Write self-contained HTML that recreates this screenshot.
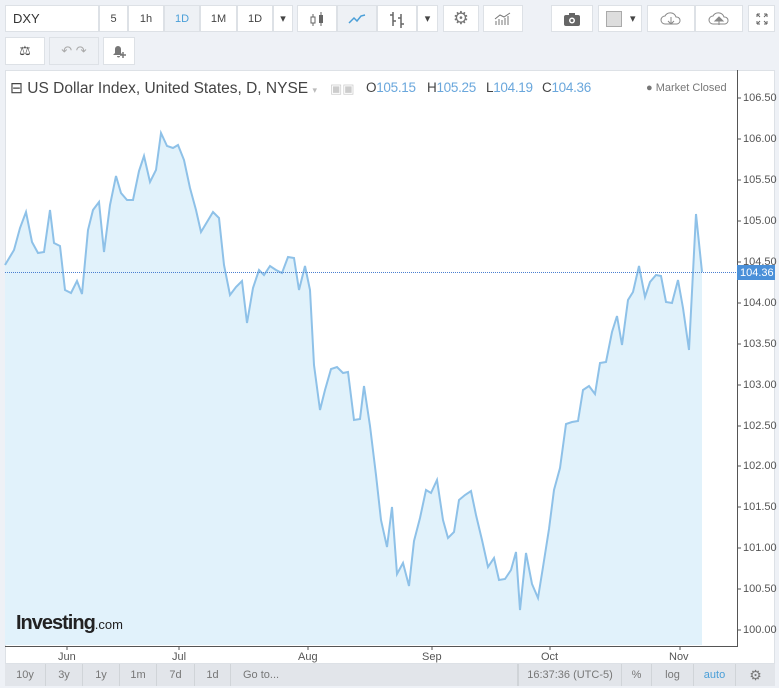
<!DOCTYPE html>
<html><head><meta charset="utf-8"><style>
*{box-sizing:border-box;margin:0;padding:0}
body{width:779px;height:688px;background:#eef1f6;font-family:"Liberation Sans",sans-serif;position:relative;overflow:hidden;color:#555}
.b{position:absolute;background:#fff;border:1px solid #dde1e6;font-size:11px;display:flex;align-items:center;justify-content:center;color:#444}
.ax{position:absolute;font-size:11px;color:#555}
.bt{position:absolute;top:664px;height:22px;font-size:11px;color:#777;display:flex;align-items:center;justify-content:center;border-right:1px solid #d0d4d8}
.h{position:absolute;top:79px;font-size:15px;color:#444;white-space:nowrap}
.h span{color:#6aa7dc}
.o{top:80px;font-size:13.5px;letter-spacing:-0.3px}
</style></head><body>
<div class="b" style="left:5px;top:5px;width:94px;height:27px;justify-content:flex-start;padding-left:7px;font-size:13px;color:#333">DXY</div>
<div class="b" style="left:99px;top:5px;width:29px;height:27px">5</div>
<div class="b" style="left:128px;top:5px;width:36px;height:27px">1h</div>
<div class="b" style="left:164px;top:5px;width:36px;height:27px;background:#eef1f5;color:#4a9fd8">1D</div>
<div class="b" style="left:200px;top:5px;width:37px;height:27px">1M</div>
<div class="b" style="left:237px;top:5px;width:36px;height:27px">1D</div>
<div class="b" style="left:273px;top:5px;width:20px;height:27px">▾</div>
<div class="b" style="left:297px;top:5px;width:40px;height:27px"><svg width="16" height="18"><path d="M4 4v12M12 2v14" stroke="#666"/><rect x="2" y="7" width="4" height="6" fill="#fff" stroke="#666"/><rect x="10" y="5" width="4" height="8" fill="#666"/></svg></div>
<div class="b" style="left:337px;top:5px;width:40px;height:27px;background:#eef1f5"><svg width="18" height="12"><path d="M1 10L6 5L9 8L13 3L17 2" stroke="#4a9fd8" fill="none" stroke-width="1.5"/></svg></div>
<div class="b" style="left:377px;top:5px;width:40px;height:27px"><svg width="16" height="18"><path d="M4 2v14M1 5h3M4 11h3M12 4v14M9 8h3M12 14h3" stroke="#666" stroke-width="1.5"/></svg></div>
<div class="b" style="left:417px;top:5px;width:21px;height:27px">▾</div>
<div class="b" style="left:443px;top:5px;width:36px;height:27px;font-size:18px;color:#777">⚙</div>
<div class="b" style="left:483px;top:5px;width:40px;height:27px"><svg width="18" height="14"><path d="M2 13v-4M5 13v-6M8 13v-5M11 13v-7M14 13v-9M1 7L6 3L10 5L16 1" stroke="#777" fill="none"/></svg></div>
<div class="b" style="left:551px;top:5px;width:42px;height:27px"><svg width="18" height="14"><rect x="1" y="3" width="16" height="11" rx="2" fill="#666"/><rect x="6" y="1" width="6" height="3" fill="#666"/><circle cx="9" cy="8.5" r="3" fill="#fff"/><circle cx="9" cy="8.5" r="1.5" fill="#666"/></svg></div>
<div class="b" style="left:598px;top:5px;width:44px;height:27px;justify-content:flex-start;padding-left:7px"><span style="width:16px;height:16px;background:#ddd;border:1px solid #aaa;display:inline-block"></span><span style="margin-left:8px">▾</span></div>
<div class="b" style="left:647px;top:5px;width:48px;height:27px"><svg width="22" height="16"><path d="M5 13a4 4 0 0 1 0-8a6 6 0 0 1 11 1a3.5 3.5 0 0 1 1 7z" fill="none" stroke="#888"/><path d="M11 6v7M8 10l3 3l3-3" fill="none" stroke="#888"/></svg></div>
<div class="b" style="left:695px;top:5px;width:48px;height:27px"><svg width="22" height="16"><path d="M5 13a4 4 0 0 1 0-8a6 6 0 0 1 11 1a3.5 3.5 0 0 1 1 7z" fill="none" stroke="#888"/><path d="M11 14v-7M7 10l4-4l4 4z" fill="#888" stroke="#888"/></svg></div>
<div class="b" style="left:748px;top:5px;width:27px;height:27px"><svg width="14" height="14"><path d="M2 2l3 3M2 2h3M2 2v3M12 2l-3 3M12 2h-3M12 2v3M2 12l3-3M2 12h3M2 12v-3M12 12l-3-3M12 12h-3M12 12v-3" stroke="#666" fill="none"/></svg></div>
<div class="b" style="left:5px;top:37px;width:40px;height:28px;font-size:13px">⚖</div>
<div class="b" style="left:49px;top:37px;width:50px;height:28px;background:#eef1f5;color:#aaa;font-size:13px">↶ ↷</div>
<div class="b" style="left:103px;top:37px;width:32px;height:28px"><svg width="16" height="16"><path d="M2 12h10l-2-2v-4a3 3 0 0 0-6 0v4z M6 13a1.5 1.5 0 0 0 3 0" fill="#777"/><path d="M12 9v6M9 12h6" stroke="#777" stroke-width="1.5"/></svg></div>
<div style="position:absolute;left:5px;top:70px;width:770px;height:594px;background:#fff;border:1px solid #dde1e6"></div>
<svg style="position:absolute;left:0;top:0" width="779" height="688">
<polygon fill="#e1f2fb" points="5,265 14,250 20,228 26,212 32,242 38,253 44,252 50,210 54,243 60,246 65,290 71,293 77,281 82,294 88,230 93,210 99,202 104,252 110,205 116,176 121,193 127,200 133,200 139,171 144,156 150,182 156,170 161,133 167,146 173,148 178,145 184,160 190,188 196,210 201,232 207,222 213,212 219,218 224,265 230,295 236,287 242,281 247,323 253,288 259,270 264,275 270,266 276,270 282,273 288,257 294,258 299,290 305,266 310,290 314,365 320,410 325,390 331,369 337,367 343,373 348,372 354,420 360,419 364,386 370,426 376,475 381,520 387,547 392,507 397,574 403,563 409,586 414,541 420,518 426,490 431,493 437,480 443,520 448,538 454,532 459,500 465,495 471,491 476,515 482,540 488,567 494,558 499,580 505,579 511,570 516,552 520,610 526,553 532,584 538,598 543,567 549,529 554,490 560,468 566,424 572,422 578,421 583,390 589,386 595,394 600,363 606,362 612,332 617,316 622,345 628,300 633,292 639,266 645,297 650,282 656,275 661,276 666,302 672,303 678,280 683,308 689,350 696,214 702,272 702,645 5,645"/>
<polyline fill="none" stroke="#8ec1e8" stroke-width="2" points="5,265 14,250 20,228 26,212 32,242 38,253 44,252 50,210 54,243 60,246 65,290 71,293 77,281 82,294 88,230 93,210 99,202 104,252 110,205 116,176 121,193 127,200 133,200 139,171 144,156 150,182 156,170 161,133 167,146 173,148 178,145 184,160 190,188 196,210 201,232 207,222 213,212 219,218 224,265 230,295 236,287 242,281 247,323 253,288 259,270 264,275 270,266 276,270 282,273 288,257 294,258 299,290 305,266 310,290 314,365 320,410 325,390 331,369 337,367 343,373 348,372 354,420 360,419 364,386 370,426 376,475 381,520 387,547 392,507 397,574 403,563 409,586 414,541 420,518 426,490 431,493 437,480 443,520 448,538 454,532 459,500 465,495 471,491 476,515 482,540 488,567 494,558 499,580 505,579 511,570 516,552 520,610 526,553 532,584 538,598 543,567 549,529 554,490 560,468 566,424 572,422 578,421 583,390 589,386 595,394 600,363 606,362 612,332 617,316 622,345 628,300 633,292 639,266 645,297 650,282 656,275 661,276 666,302 672,303 678,280 683,308 689,350 696,214 702,272"/>
<line x1="5" y1="272.5" x2="737" y2="272.5" stroke="#4a7fd0" stroke-dasharray="1,1"/>
<line x1="737.5" y1="70" x2="737.5" y2="647" stroke="#555"/>
<line x1="5" y1="646.5" x2="737" y2="646.5" stroke="#555"/>
<g stroke="#555"><line x1="737" y1="98" x2="741" y2="98"/><line x1="737" y1="139" x2="741" y2="139"/><line x1="737" y1="180" x2="741" y2="180"/><line x1="737" y1="221" x2="741" y2="221"/><line x1="737" y1="262" x2="741" y2="262"/><line x1="737" y1="303" x2="741" y2="303"/><line x1="737" y1="344" x2="741" y2="344"/><line x1="737" y1="385" x2="741" y2="385"/><line x1="737" y1="426" x2="741" y2="426"/><line x1="737" y1="466" x2="741" y2="466"/><line x1="737" y1="507" x2="741" y2="507"/><line x1="737" y1="548" x2="741" y2="548"/><line x1="737" y1="589" x2="741" y2="589"/><line x1="737" y1="630" x2="741" y2="630"/>
<line x1="67" y1="646" x2="67" y2="650"/><line x1="179" y1="646" x2="179" y2="650"/><line x1="308" y1="646" x2="308" y2="650"/><line x1="432" y1="646" x2="432" y2="650"/><line x1="550" y1="646" x2="550" y2="650"/><line x1="680" y1="646" x2="680" y2="650"/></g>
<rect x="737" y="265" width="38" height="15" fill="#4a90d9"/>
<text x="740" y="276" font-size="11" fill="#fff" font-family="Liberation Sans">104.36</text>
</svg>
<div class="ax" style="left:743px;top:92px">106.50</div><div class="ax" style="left:743px;top:133px">106.00</div><div class="ax" style="left:743px;top:174px">105.50</div><div class="ax" style="left:743px;top:215px">105.00</div><div class="ax" style="left:743px;top:256px">104.50</div><div class="ax" style="left:743px;top:297px">104.00</div><div class="ax" style="left:743px;top:338px">103.50</div><div class="ax" style="left:743px;top:379px">103.00</div><div class="ax" style="left:743px;top:420px">102.50</div><div class="ax" style="left:743px;top:460px">102.00</div><div class="ax" style="left:743px;top:501px">101.50</div><div class="ax" style="left:743px;top:542px">101.00</div><div class="ax" style="left:743px;top:583px">100.50</div><div class="ax" style="left:743px;top:624px">100.00</div>
<div class="ax" style="left:58px;top:651px">Jun</div><div class="ax" style="left:172px;top:651px">Jul</div><div class="ax" style="left:298px;top:651px">Aug</div><div class="ax" style="left:422px;top:651px">Sep</div><div class="ax" style="left:541px;top:651px">Oct</div><div class="ax" style="left:669px;top:651px">Nov</div>
<div class="h" style="left:10px;font-size:15.5px">⊟ US Dollar Index, United States, D, NYSE <b style="font-size:9px;color:#bbb;font-weight:normal">▾</b></div>
<div class="h" style="left:330px;color:#ccc;font-size:13px;top:81px">▣▣</div>
<div class="h o" style="left:366px">O<span>105.15</span></div>
<div class="h o" style="left:427px">H<span>105.25</span></div>
<div class="h o" style="left:486px">L<span>104.19</span></div>
<div class="h o" style="left:542px">C<span>104.36</span></div>
<div style="position:absolute;left:646px;top:82px;font-size:11px;color:#777">● Market Closed</div>
<div style="position:absolute;left:16px;top:612px;font-size:20px;font-weight:bold;color:#222;letter-spacing:-1px">Investing<span style="font-size:13px;font-weight:normal;letter-spacing:0">.com</span></div>
<div style="position:absolute;left:5px;top:664px;width:770px;height:22px;background:#e2e5ea"></div>
<div class="bt" style="left:5px;width:41px">10y</div><div class="bt" style="left:46px;width:37px">3y</div><div class="bt" style="left:83px;width:37px">1y</div><div class="bt" style="left:120px;width:37px">1m</div><div class="bt" style="left:157px;width:38px">7d</div><div class="bt" style="left:195px;width:36px">1d</div><div class="bt" style="left:231px;width:287px;justify-content:flex-start;padding-left:12px">Go to...</div>
<div class="bt" style="left:518px;width:104px;border-left:1px solid #d0d4d8">16:37:36 (UTC-5)</div><div class="bt" style="left:622px;width:30px">%</div><div class="bt" style="left:652px;width:42px">log</div><div class="bt" style="left:694px;width:42px;color:#4a9fd8">auto</div><div class="bt" style="left:736px;width:39px;border:none;font-size:14px">⚙</div>
</body></html>
